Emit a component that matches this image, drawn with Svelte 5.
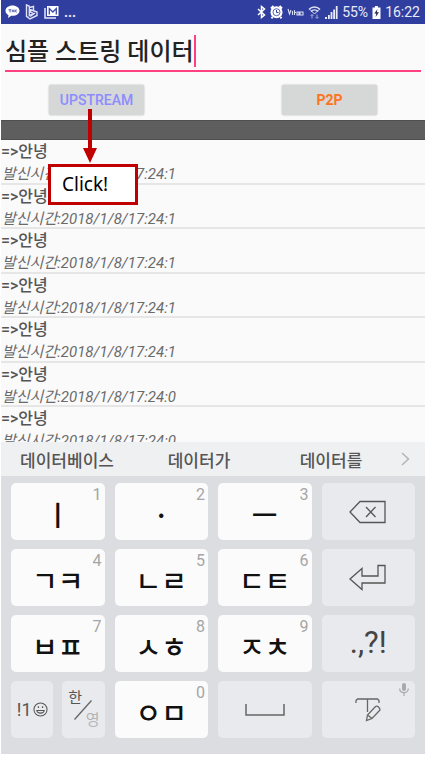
<script>
  let message = $state('심플 스트링 데이터');
  const messages = [1, 1, 1, 1, 1, 0, 0].map((s) => ({
    text: '=>안녕',
    time: `발신시간:2018/1/8/17:24:${s}`
  }));
  const suggestions = ['데이터베이스', '데이터가', '데이터를'];
</script>

{#snippet letter(text, digit)}
  <button class="key light" type="button"><span class="jamo">{text}</span><span class="digit">{digit}</span></button>
{/snippet}

<main class="phone">
  <header class="status">
    <div class="group">
      <svg width="15" height="14" viewBox="0 0 15 14" aria-hidden="true">
        <path d="M7.500 .5C3.500.5.5 2.800.5 5.800c0 2 1.200 3.500 3 4.400L3 13l3.200-2.200c5 .4 8.300-2 8.300-5 0-3-3-5.300-7-5.300z" fill="#fff" />
        <path d="M3.500 4.800h3M5 4.800v2.500M7 7.200l1-2.400 1 2.400M10 4.500v2.700M11.800 4.800l-1.500 1.200 1.500 1.300" stroke="#5260b0" fill="none" stroke-width="1" />
      </svg>
      <svg width="14" height="16" viewBox="0 0 14 16" fill="none" stroke="#dfe2f5" stroke-width="1.400" aria-hidden="true">
        <path d="M1.500 1l2.800 1.200v9.300L8 9.500 5.800 8.200 5 5.500l7 2.600v3.400L5 15l-3.500-2.600z" />
        <path d="M4.500 3.500l4-1v4M5 12.500l5-3.500" />
      </svg>
      <svg width="15" height="14" viewBox="0 0 15 14" aria-hidden="true">
        <path d="M1 3v10h11" fill="none" stroke="#e6e8f7" stroke-width="1.500" />
        <rect x="3" y="1" width="11.500" height="10" fill="#fff" />
        <path d="M5.300 9.500v-6L8.800 7l3.500-3.500v6" fill="none" stroke="#3949a5" stroke-width="1.300" />
      </svg>
      <span class="more">...</span>
    </div>
    <div class="group right">
      <svg width="9" height="14" viewBox="0 0 9 14" fill="none" stroke="#fff" stroke-width="1.500" aria-hidden="true"><path d="M1 4l6.500 6L4.500 12.500v-11L7.500 4 1 10" /></svg>
      <svg width="13" height="14" viewBox="0 0 13 14" aria-hidden="true">
        <circle cx="6.500" cy="7.200" r="6" fill="#fff" />
        <path d="M1 3.500L3.500 1M12 3.500L9.500 1M2.500 12l-1 1.300M10.500 12l1 1.300" stroke="#fff" stroke-width="2" />
        <circle cx="6.500" cy="7.200" r="3.500" fill="none" stroke="#303f9f" stroke-width=".8" />
        <path d="M6.500 5v2.500h2" fill="none" stroke="#303f9f" />
      </svg>
      <svg width="17" height="8" viewBox="0 0 17 8" fill="none" stroke="#d9ddf3" stroke-width="1.100" aria-hidden="true"><path d="M1 1l1.500 5L4 2M5.500 3v4M7 4.500h2M7.500 2v5M10 4h2v3h-2zM13 4h3v3h-3z" /></svg>
      <svg width="13" height="13" viewBox="0 0 13 13" fill="none" stroke="#dfe2f5" aria-hidden="true">
        <path d="M1 3.500C4 .3 9 .3 12 3.500M3 5.500c2-2 5-2 7 0" stroke-width="1.500" /><path d="M2 3.500L6.500 8 11 3.500" />
        <path d="M4 8.500v4M2.500 10L4 8.500 5.500 10M9 12V8.500M7.500 11L9 12.500l1.500-1.500" stroke="#a4add9" />
      </svg>
      <svg width="13" height="13" viewBox="0 0 13 13" fill="#e9ebf8" aria-hidden="true"><path d="M0 11h2v2H0zM3 9h1.800v4H3zM5.600 6h1.800v7H5.600zM8.200 3.500H10V13H8.200zM10.800 0h1.800v13h-1.800z" /></svg>
      <span>55%</span>
      <svg width="9" height="13" viewBox="0 0 9 13" aria-hidden="true"><path d="M3 0h3v1.500h2.500V13h-8V1.500H3z" fill="#fff" /><path d="M5.500 3L2.300 7.500h2L3.600 11 7 6.200H4.800z" fill="#222a55" /></svg>
      <span>16:22</span>
    </div>
  </header>

  <section class="compose">
    <div class="field">
      <input aria-label="메시지" bind:value={message} />
      <span class="caret"></span>
    </div>
    <div class="actions">
      <button type="button" class="raised up">UPSTREAM</button>
      <button type="button" class="raised p2p">P2P</button>
    </div>
    <div class="callout">
      <svg width="14" height="54" viewBox="0 0 14 54" fill="#c00000" aria-hidden="true"><path d="M5 0h4v39h5L7 54 0 39h5z" /></svg>
      <div class="tip">Click!</div>
    </div>
  </section>

  <div class="band"></div>

  <div class="log">
    <ul>
      {#each messages as m}
        <li><strong>{m.text}</strong><em>{m.time}</em></li>
      {/each}
    </ul>
  </div>

  <nav class="suggest">
    {#each suggestions as s}<button type="button">{s}</button>{/each}
    <button type="button" class="next" aria-label="더 보기">
      <svg width="9" height="14" viewBox="0 0 9 14" fill="none" stroke="#b4b4b7" stroke-width="1.500"><path d="M1 1l6.500 6L1 13" /></svg>
    </button>
  </nav>

  <section class="keys">
    {@render letter('ㅣ', '1')}
    {@render letter('·', '2')}
    {@render letter('ㅡ', '3')}
    <button class="key" type="button" aria-label="지우기">
      <svg width="38" height="24" viewBox="0 0 38 24" fill="none" stroke="#555" stroke-width="1.300"><path d="M1 12L11 1.500h25v21H11zM17 7l9.500 10M26.500 7L17 17" /></svg>
    </button>
    {@render letter('ㄱㅋ', '4')}
    {@render letter('ㄴㄹ', '5')}
    {@render letter('ㄷㅌ', '6')}
    <button class="key" type="button" aria-label="입력">
      <svg width="38" height="27" viewBox="0 0 38 27" fill="none" stroke="#555" stroke-width="1.300"><path d="M1 15L13 4.500v7.500h16V1.500h7V19H13v6.500z" /></svg>
    </button>
    {@render letter('ㅂㅍ', '7')}
    {@render letter('ㅅㅎ', '8')}
    {@render letter('ㅈㅊ', '9')}
    <button class="key punct" type="button">.,?!</button>
    <div class="pair">
      <button class="key symbols" type="button" aria-label="기호">
        <span>!1</span>
        <svg width="15" height="15" viewBox="0 0 16 16" fill="none" stroke="#555" stroke-width="1.100"><circle cx="8" cy="8" r="7" /><path d="M4 9c.5 3.800 7.500 3.800 8 0z" /><path d="M5.800 4.500v2M10.200 4.500v2" stroke-width="1.300" /></svg>
      </button>
      <button class="key lang" type="button">
        <span>한</span>
        <svg width="18" height="20" viewBox="0 0 18 20" fill="none" stroke="#666" stroke-width="1.300" aria-hidden="true"><path d="M.5 19.500L17.500.5" /></svg>
        <span class="off">영</span>
      </button>
    </div>
    {@render letter('ㅇㅁ', '0')}
    <button class="key" type="button" aria-label="스페이스">
      <svg width="40" height="12" viewBox="0 0 40 12" fill="none" stroke="#666" stroke-width="1.500"><path d="M1 0v11h38V0" /></svg>
    </button>
    <button class="key" type="button" aria-label="필기">
      <svg width="27" height="24" viewBox="0 0 27 24" fill="none" stroke="#666" stroke-width="1.300">
        <path d="M1 5V2.500L2.500 1h20L24 2.500V5M12.500 1v13" />
        <path d="M11.500 22.500l1-5.500 8-8.500q1.500-1 3 .5t1.500 3L17 20.500zM12.500 17l4.500 3.500" />
      </svg>
      <svg class="mic" width="10" height="14" viewBox="0 0 10 14" aria-hidden="true"><rect x="3" y="0" width="4" height="8" rx="2" fill="#a9a9ac" /><path d="M.7 5.500c0 5.500 8.600 5.500 8.600 0M5 9.500v3.500" fill="none" stroke="#a9a9ac" stroke-width="1.200" /></svg>
    </button>
  </section>
</main>

<style>
  :global(body) { margin: 0; background: #fff; }
  .phone {
    margin: 0 2px 0 1px;
    background: #fafafa;
    font-family: Roboto, "Noto Sans CJK KR", sans-serif;
    color: #555;
  }
  button { font: inherit; color: inherit; border: 0; padding: 0; background: none; }
  svg { display: block; flex: none; }
  .status {
    display: flex;
    justify-content: space-between;
    align-items: center;
    height: 24px;
    padding: 0 5px 0 4px;
    background: #303f9f;
    color: #e9ebf8;
    font-size: 14px;
  }
  .group { display: flex; align-items: center; gap: 5px; }
  .right { gap: 4px; }
  .more { font-weight: 700; }
  .compose { position: relative; }
  .field { position: relative; padding: 6px 4px 0; }
  input {
    display: block;
    box-sizing: border-box;
    width: 100%;
    height: 42px;
    padding: 0 0 2px;
    border: 0;
    border-bottom: 2px solid #ff4081;
    background: none;
    outline: none;
    color: #222;
    font: 500 24px Roboto, "Noto Sans CJK KR", sans-serif;
  }
  .caret { position: absolute; left: 193px; top: 11px; width: 2px; height: 32px; background: #ff4081; }
  .actions { display: flex; justify-content: space-between; height: 35px; padding: 13px 48px 0; align-items: flex-start; }
  .raised {
    width: 95px;
    height: 30px;
    border-radius: 2px;
    background: #d6d7d7;
    box-shadow: 0 0 2px #aaa;
    font-size: 14px;
    font-weight: 500;
  }
  .up { color: #8c8cff; }
  .p2p { color: #ff7320; font-weight: 700; }
  .callout { position: absolute; left: 47px; top: 85px; z-index: 1; display: flex; flex-direction: column; gap: 1px; }
  .callout svg { margin-left: 35px; }
  .tip {
    box-sizing: border-box;
    width: 90px;
    height: 41px;
    padding-left: 11px;
    border: 3px solid #c00000;
    background: #fff;
    color: #000;
    font: 19px/35px "Noto Sans", sans-serif;
  }
  .band { box-sizing: border-box; height: 20px; background: #5e5e5e; border: 1px solid #4f4f4f; border-width: 1px 0; }
  .log { height: 302px; overflow: hidden; }
  ul { display: grid; grid-template-rows: repeat(7, 1fr); height: 312px; margin: 0; padding: 0; list-style: none; }
  li { display: flex; flex-direction: column; min-height: 0; box-sizing: border-box; border-bottom: 2px solid #e6e6e6; font-size: 15px; line-height: 22px; white-space: nowrap; }
  strong { font-size: 16px; font-weight: 500; line-height: 23px; }
  em { color: #6a6a6a; padding-left: 1px; }
  .suggest {
    display: grid;
    grid-template-columns: 132px 132px 132px 1fr;
    height: 34px;
    background: #eff0f2;
    font-size: 17px;
    font-weight: 500;
    color: #555;
  }
  .next { display: flex; align-items: center; padding-left: 4px; }
  .keys {
    display: grid;
    grid-template-columns: repeat(4, 1fr);
    grid-auto-rows: 57px;
    gap: 9px 10px;
    padding: 7px 10px 16px;
    background: #dcdde1;
  }
  .key {
    position: relative;
    display: flex;
    align-items: center;
    justify-content: center;
    border-radius: 5px;
    background: #e9eaee;
  }
  .light { background: #fbfbfb; color: #111; }
  .jamo { padding-top: 5px; font: 500 28px/40px "Noto Sans CJK KR", sans-serif; }
  .digit { position: absolute; top: 3px; right: 3px; color: #a5a5a7; font-size: 16px; line-height: 18px; }
  .punct { padding-bottom: 3px; font-size: 31px; color: #444; }
  .pair { display: grid; grid-template-columns: 1fr 1fr; gap: 9px; }
  .symbols { font-size: 18px; gap: 1px; }
  .lang { display: grid; grid-template: 100% / 100%; place-items: center; font-size: 15px; line-height: 18px; }
  .lang > * { grid-area: 1 / 1; }
  .lang span { place-self: start; padding: 8px 0 0 6px; }
  .lang .off { place-self: end; padding: 0 5px 9px 0; color: #b4b4b7; }
  .mic { position: absolute; top: 2px; right: 6px; }
</style>
